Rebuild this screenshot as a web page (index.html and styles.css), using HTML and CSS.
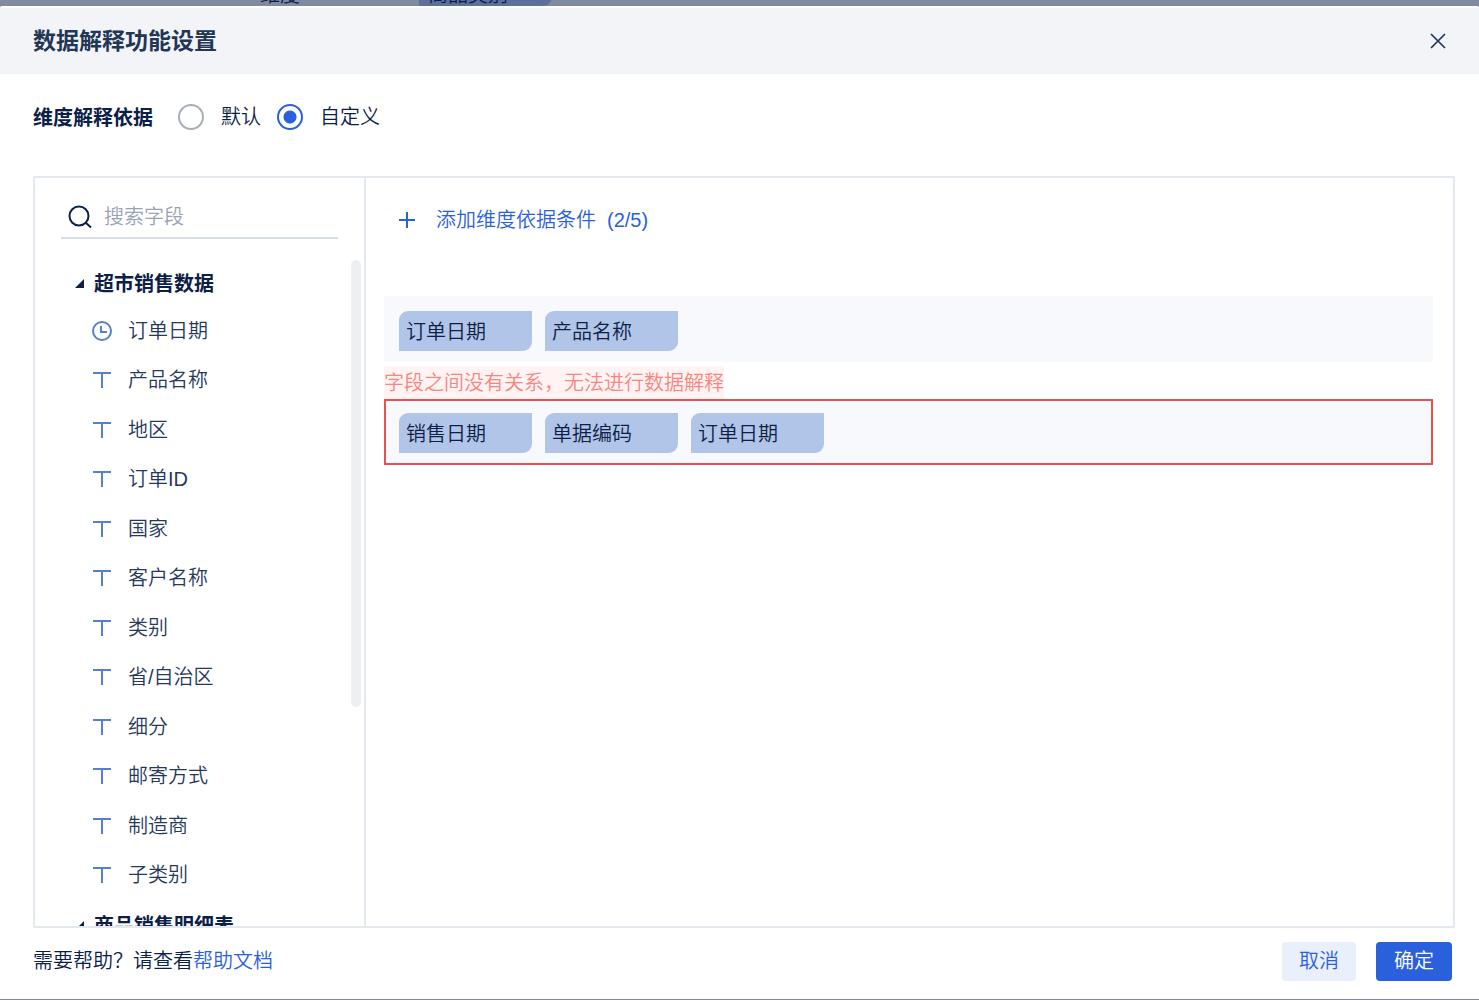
FILE: index.html
```html
<!DOCTYPE html>
<html lang="zh-CN">
<head>
<meta charset="utf-8">
<meta name="viewport" content="width=device-width, initial-scale=1">
<title>数据解释功能设置</title>
<link rel="stylesheet" href="styles.css">
</head>
<body>
<svg class="sprite" aria-hidden="true">
  <symbol id="text-type" viewBox="0 0 20 20"><path d="M1 3h18M10 3v15" fill="none" stroke="currentColor" stroke-width="2"/></symbol>
  <symbol id="triangle" viewBox="0 0 9 12"><path d="M9 1v9H0z" fill="currentColor"/></symbol>
</svg>
<div class="backdrop">
  <span class="backdrop-label">维度</span>
  <span class="backdrop-pill">商品类别</span>
</div>
<main class="dialog" role="dialog" aria-labelledby="title">
  <header class="dialog-header">
    <h1 class="dialog-title" id="title">数据解释功能设置</h1>
    <button class="close" type="button" aria-label="关闭">
      <svg width="16" height="16" viewBox="0 0 16 16"><path d="M1 1l14 14M15 1L1 15" fill="none" stroke="currentColor" stroke-width="1.7"/></svg>
    </button>
  </header>
  <div class="basis" role="radiogroup" aria-labelledby="basis-name">
    <span class="basis-name" id="basis-name">维度解释依据</span>
    <label class="option"><input class="radio" type="radio" name="basis">默认</label>
    <label class="option"><input class="radio" type="radio" name="basis" checked>自定义</label>
  </div>
  <div class="panel">
    <aside class="fields">
      <label class="search">
        <svg width="24" height="24" viewBox="0 0 24 24"><circle cx="11" cy="11" r="9.5" fill="none" stroke="currentColor" stroke-width="2"/><path d="M17.5 17.5L23 22.5" fill="none" stroke="currentColor" stroke-width="2"/></svg>
        <input class="search-input" type="text" placeholder="搜索字段" aria-label="搜索字段">
      </label>
      <div class="tree">
        <div class="tree-content">
          <h2 class="group"><svg width="9" height="12"><use href="#triangle"/></svg>超市销售数据</h2>
          <ul class="field-list">
            <li class="field"><svg width="20" height="20" viewBox="0 0 20 20"><circle cx="10" cy="10" r="9" fill="none" stroke="currentColor" stroke-width="2"/><path d="M9 5v6h6" fill="none" stroke="currentColor" stroke-width="2"/></svg>订单日期</li>
            <li class="field"><svg width="20" height="20"><use href="#text-type"/></svg>产品名称</li>
            <li class="field"><svg width="20" height="20"><use href="#text-type"/></svg>地区</li>
            <li class="field"><svg width="20" height="20"><use href="#text-type"/></svg>订单ID</li>
            <li class="field"><svg width="20" height="20"><use href="#text-type"/></svg>国家</li>
            <li class="field"><svg width="20" height="20"><use href="#text-type"/></svg>客户名称</li>
            <li class="field"><svg width="20" height="20"><use href="#text-type"/></svg>类别</li>
            <li class="field"><svg width="20" height="20"><use href="#text-type"/></svg>省/自治区</li>
            <li class="field"><svg width="20" height="20"><use href="#text-type"/></svg>细分</li>
            <li class="field"><svg width="20" height="20"><use href="#text-type"/></svg>邮寄方式</li>
            <li class="field"><svg width="20" height="20"><use href="#text-type"/></svg>制造商</li>
            <li class="field"><svg width="20" height="20"><use href="#text-type"/></svg>子类别</li>
          </ul>
          <h2 class="group"><svg width="9" height="12"><use href="#triangle"/></svg>商品销售明细表</h2>
        </div>
        <div class="scrollbar"></div>
      </div>
    </aside>
    <section class="conditions">
      <button class="add" type="button">
        <svg width="18" height="18" viewBox="0 0 18 18"><path d="M9 1v16M1 9h16" fill="none" stroke="currentColor" stroke-width="2"/></svg>
        <span class="add-text"><span>添加维度依据条件</span><span>(2/5)</span></span>
      </button>
      <div class="condition">
        <span class="chip">订单日期</span>
        <span class="chip">产品名称</span>
      </div>
      <p class="error">字段之间没有关系，无法进行数据解释</p>
      <div class="condition condition-invalid">
        <span class="chip">销售日期</span>
        <span class="chip">单据编码</span>
        <span class="chip">订单日期</span>
      </div>
    </section>
  </div>
  <footer class="dialog-footer">
    <p class="help">需要帮助？请查看<a class="link" href="#help">帮助文档</a></p>
    <button class="button" type="button">取消</button>
    <button class="button button-primary" type="button">确定</button>
  </footer>
</main>
</body>
</html>
```
FILE: styles.css
```css
* { box-sizing: border-box; }
body, h1, h2, p, ul { margin: 0; padding: 0; }
body {
  display: flex;
  flex-direction: column;
  height: 100vh;
  background: #808b9f;
  color: #0c2047;
  font: 350 20px/30px "Liberation Sans", "Noto Sans CJK SC", sans-serif;
}
button, input { font: inherit; color: inherit; }
button { border: 0; padding: 0; background: none; cursor: pointer; }
svg { flex: none; }
.sprite { position: absolute; width: 0; height: 0; }

.backdrop {
  display: flex;
  align-items: flex-end;
  height: 6px;
  overflow: hidden;
  flex: none;
  padding-left: 250px;
  line-height: 22px;
}
.backdrop-label { width: 169px; padding: 0 10px; }
.backdrop-pill { width: 133px; padding: 0 9px; background: #5c7099; border-radius: 0 0 9px 0; }

.dialog {
  display: flex;
  flex-direction: column;
  flex: 1;
  min-height: 0;
  margin-bottom: 1px;
  border-top: 2px solid #fff;
  border-radius: 2px 2px 0 0;
  background: #fff;
}
.dialog-header {
  display: flex;
  align-items: center;
  justify-content: space-between;
  height: 66px;
  flex: none;
  padding: 0 33px;
  background: #f2f4f8;
  color: #223655;
}
.dialog-title { font-size: 23px; font-weight: 700; line-height: 32px; }
.close { display: flex; }

.basis { display: flex; align-items: center; height: 86px; flex: none; padding: 0 33px; }
.basis-name { margin-right: 25px; padding-top: 2px; font-weight: 700; }
.option { display: flex; align-items: center; gap: 17px; margin-right: 16px; }
.radio {
  appearance: none;
  width: 26px;
  height: 26px;
  margin: 0;
  border: 2px solid #a6aebd;
  border-radius: 50%;
}
.radio:checked { border-color: #2b60dd; background: radial-gradient(circle, #2b60dd 6px, #fff 7px); }

.panel { display: flex; flex: 1; min-height: 0; margin: 16px 24px 0 33px; border: 2px solid #e4e8ef; }
.fields { display: flex; flex-direction: column; flex: none; width: 331px; border-right: 2px solid #e4e8ef; }
.search {
  display: flex;
  align-items: center;
  gap: 12px;
  height: 61px;
  flex: none;
  margin: 0 26px;
  padding: 18px 7px 0;
  border-bottom: 2px solid #d8dee8;
}
.search-input { flex: 1; min-width: 0; border: 0; padding: 0; outline: 0; background: none; }
.search-input::placeholder { color: #9aa3b5; opacity: 1; }
.tree { display: flex; flex: 1; min-height: 0; overflow: hidden; }
.tree-content { flex: 1; padding: 22px 0 0 40px; }
.group { display: flex; align-items: center; gap: 10px; height: 45px; font-size: 20px; font-weight: 700; }
.field-list { display: grid; grid-auto-rows: 1fr; height: 594px; margin-bottom: 3px; list-style: none; }
.field { display: flex; align-items: center; gap: 16px; padding-left: 17px; color: #26395b; }
.field svg { color: #5680cf; }
.scrollbar { width: 10px; height: 447px; margin: 21px 3px 0 0; border-radius: 5px; background: #edeff3; }

.conditions { display: flex; flex-direction: column; align-items: flex-start; flex: 1; min-width: 0; padding: 27px 20px 0 18px; }
.add { display: flex; align-items: center; gap: 20px; margin: 0 0 61px 14px; color: #2b60dd; }
.add-text { display: flex; gap: 11px; }
.condition { display: flex; align-items: center; gap: 13px; width: 100%; min-height: 66px; padding: 4px 15px 0; background: #f8f9fd; }
.condition-invalid { padding: 2px 13px 0; border: 2px solid #e65251; }
.chip { width: 133px; padding: 6px 7px 4px; border-radius: 9px 0 9px 0; background: #b0c5e8; }
.error { margin-top: 4px; padding: 2px 0 1px; background: #fff4f3; color: #fa8480; }

.dialog-footer { display: flex; align-items: center; gap: 20px; height: 71px; flex: none; padding: 0 27px 5px 33px; }
.help { flex: 1; }
.link { color: #2b60dd; text-decoration: none; }
.button { height: 39px; padding: 0 17px; border-radius: 4px; background: #e9effb; color: #2b60dd; }
.button-primary { padding: 0 18px; background: #2b60dd; color: #fff; }
```
